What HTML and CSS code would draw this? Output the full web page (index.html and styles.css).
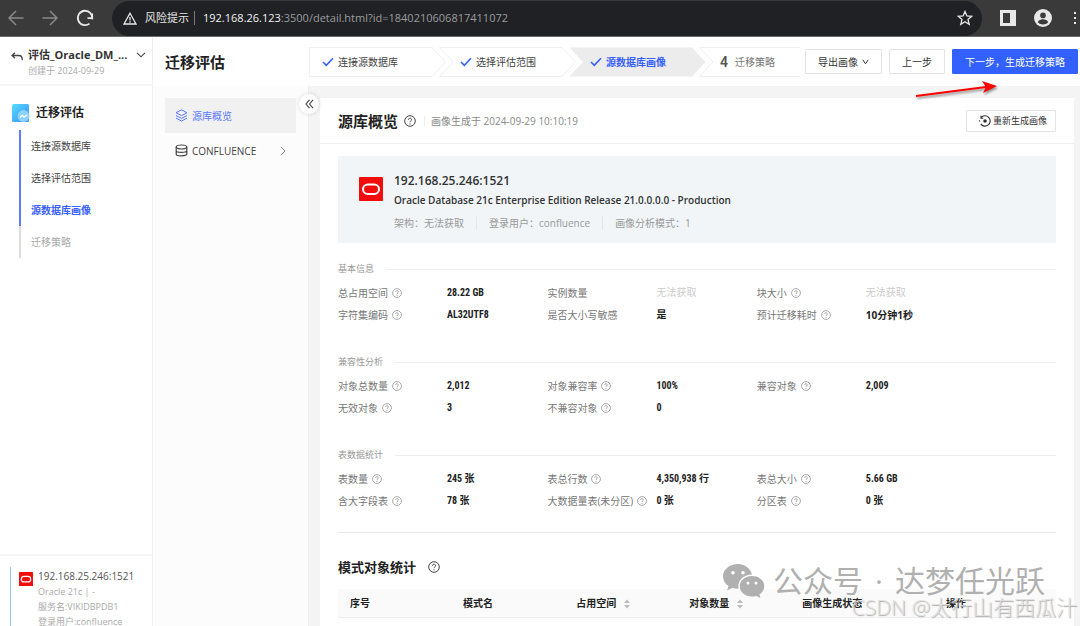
FILE: index.html
```html
<!DOCTYPE html>
<html lang="zh-CN">
<head>
    <meta charset="utf-8">
    <title>迁移评估</title>
    <link rel="stylesheet" href="styles.css">
</head>
<body>
    <svg class="symbols" aria-hidden="true">
        <symbol id="help" viewBox="0 0 12 12">
            <circle cx="6" cy="6" r="5.3" fill="none" stroke="currentColor"/>
            <path d="M4.4 4.8c0-2.1 3.2-2.1 3.2-.1 0 1.2-1.6 1.2-1.6 2.5" fill="none" stroke="currentColor"/>
            <circle cx="6" cy="8.8" r=".65" fill="currentColor"/>
        </symbol>
        <symbol id="tick" viewBox="0 0 12 10">
            <path d="M1 5l3.3 3.3L11 1.3" fill="none" stroke="currentColor" stroke-width="1.6"/>
        </symbol>
        <symbol id="oracle" viewBox="0 0 24 24">
            <rect width="24" height="24" rx="1" fill="#f20d0d"/>
            <rect x="4" y="7.5" width="16" height="9.5" rx="4.75" fill="none" stroke="#fff" stroke-width="2"/>
        </symbol>
        <symbol id="sort" viewBox="0 0 6 10">
            <path d="M0 4l3-3.5L6 4zM0 6l3 3.5L6 6z" fill="currentColor"/>
        </symbol>
    </svg>

    <!-- 浏览器地址栏 -->
    <div class="browser">
        <button class="browser-btn dim" aria-label="后退"><svg width="16" height="16" viewBox="0 0 16 16"><path d="M15.5 8H1.5M8 1L1 8l7 7" fill="none" stroke="currentColor" stroke-width="1.5"/></svg></button>
        <button class="browser-btn dim" aria-label="前进"><svg width="16" height="16" viewBox="0 0 16 16"><path d="M.5 8h14M8 1l7 7-7 7" fill="none" stroke="currentColor" stroke-width="1.5"/></svg></button>
        <button class="browser-btn refresh" aria-label="刷新"><svg width="18" height="18" viewBox="0 0 18 18"><path d="M13.5 14.6a7.2 7.2 0 1 1 2.6-4.2M16.2 4.5v4.7h-4.7" fill="none" stroke="currentColor" stroke-width="1.8"/></svg></button>
        <div class="address">
            <svg width="14" height="13" viewBox="0 0 14 13"><path d="M7 1.2L13 12H1z" fill="none" stroke="currentColor" stroke-width="1.3"/><path d="M7 5v3.4M7 9.3v1.4" stroke="currentColor" stroke-width="1.3"/></svg>
            <span class="warn">风险提示</span>
            <span class="url"><b>192.168.26.123</b>:3500/detail.html?id=1840210606817411072</span>
            <button class="browser-btn star" aria-label="收藏"><svg width="16" height="16" viewBox="0 0 16 16"><path d="M8 1.4l1.9 4.5 4.8.4-3.7 3.2 1.2 4.8L8 11.7l-4.2 2.6L5 9.5 1.3 6.3l4.8-.4z" fill="none" stroke="currentColor" stroke-width="1.3"/></svg></button>
        </div>
        <button class="browser-btn" aria-label="侧边栏"><svg width="16" height="16" viewBox="0 0 16 16"><path d="M0 0h16v16H0zM3 3v10h7V3z" fill="currentColor" fill-rule="evenodd"/></svg></button>
        <button class="browser-btn" aria-label="用户"><svg width="18" height="18" viewBox="0 0 18 18"><circle cx="9" cy="9" r="9" fill="currentColor"/><circle cx="9" cy="6.4" r="2.8" fill="#3a3a3b"/><path d="M3.8 13.3c1-4.2 9.4-4.2 10.4 0-2.6 3-7.8 3-10.4 0z" fill="#3a3a3b"/></svg></button>
        <button class="browser-btn more" aria-label="更多"><svg width="4" height="12" viewBox="0 0 4 12"><path d="M1 0h2v2H1zM1 5h2v2H1zM1 10h2v2H1z" fill="currentColor"/></svg></button>
    </div>

    <div class="app">
        <aside class="sidebar">
            <div class="project">
                <svg class="back" width="12" height="10" viewBox="0 0 12 10"><path d="M4 .8L1 3.5l3 2.7M1 3.5h7c2.2 0 3.3 1.7 3.3 4.8" fill="none" stroke="currentColor" stroke-width="1.3"/></svg>
                <div class="project-text">
                    <div class="project-name">评估_Oracle_DM_...</div>
                    <div class="project-date">创建于 2024-09-29</div>
                </div>
                <svg class="down" width="10" height="6" viewBox="0 0 10 6"><path d="M1 .8l4 4 4-4" fill="none" stroke="currentColor" stroke-width="1.1"/></svg>
            </div>
            <div class="menu-title">
                <svg width="20" height="20" viewBox="0 0 20 20">
                    <defs><linearGradient id="g" x1="0" y1="0" x2="1" y2="1"><stop offset="0" stop-color="#55dcff"/><stop offset="1" stop-color="#3b8cf8"/></linearGradient></defs>
                    <rect x="1" y="1" width="17" height="18" rx="1.5" fill="url(#g)"/>
                    <circle cx="12.5" cy="13" r="6" fill="#8ad2ff"/>
                    <path d="M9 14.5l2.3-2 1.7 1.5 3-2" fill="none" stroke="#fff" stroke-width="1.4"/>
                </svg>
                迁移评估
            </div>
            <nav class="menu">
                <a class="menu-item" href="#">连接源数据库</a>
                <a class="menu-item" href="#">选择评估范围</a>
                <a class="menu-item active" href="#">源数据库画像</a>
                <a class="menu-item disabled" href="#">迁移策略</a>
            </nav>
            <div class="source">
                <div class="source-inner">
                    <svg width="14" height="14"><use href="#oracle"/></svg>
                    <div>
                        <div class="source-host">192.168.25.246:1521</div>
                        <div>Oracle 21c | -</div>
                        <div>服务名:VIKIDBPDB1</div>
                        <div>登录用户:confluence</div>
                    </div>
                </div>
            </div>
        </aside>

        <div class="page">
            <header class="header">
                <h1>迁移评估</h1>
                <ol class="steps">
                    <li class="step"><svg class="step-bg" viewBox="0 0 137 30"><path d="M.5.5H123l13.5 14.5L123 29.5H.5z"/></svg><svg class="tick"><use href="#tick"/></svg>连接源数据库</li>
                    <li class="step"><svg class="step-bg" viewBox="0 0 137 30"><path d="M.5.5H123l13.5 14.5L123 29.5H.5L14 15z"/></svg><svg class="tick"><use href="#tick"/></svg>选择评估范围</li>
                    <li class="step current"><svg class="step-bg" viewBox="0 0 137 30"><path d="M.5.5H123l13.5 14.5L123 29.5H.5L14 15z"/></svg><svg class="tick"><use href="#tick"/></svg>源数据库画像</li>
                    <li class="step last"><svg class="step-bg" viewBox="0 0 137 30"><path d="M101 .5H.5L14 15 .5 29.5H101"/></svg><span class="num">4</span>迁移策略</li>
                </ol>
                <div class="actions">
                    <button class="btn">导出画像 <svg width="7" height="6" viewBox="0 0 7 6"><path d="M.8.8l2.7 4 2.7-4" fill="none" stroke="currentColor"/></svg></button>
                    <button class="btn">上一步</button>
                    <button class="btn primary">下一步，生成迁移策略</button>
                </div>
                <svg class="arrow" width="90" height="24" viewBox="0 0 90 24">
                    <path d="M2 17L72 8" stroke="#f00" stroke-width="2"/>
                    <path d="M68 2l15 5-14 7 3-6z" fill="#f00"/>
                </svg>
            </header>

            <div class="body">
                <nav class="subnav">
                    <a class="subnav-item active" href="#">
                        <svg width="13" height="13" viewBox="0 0 13 13"><path d="M6.5.8l5.5 2.9-5.5 2.9L1 3.7zM1 6.5l5.5 2.9L12 6.5M1 9.1L6.5 12 12 9.1" fill="none" stroke="currentColor"/></svg>
                        源库概览
                    </a>
                    <a class="subnav-item" href="#">
                        <svg width="13" height="13" viewBox="0 0 13 13"><path d="M1.2 3v7.2c0 2.2 10.6 2.2 10.6 0V3M1.2 6.8c0 2.2 10.6 2.2 10.6 0" fill="none" stroke="currentColor" stroke-width="1.2"/><ellipse cx="6.5" cy="3" rx="5.3" ry="2" fill="none" stroke="currentColor" stroke-width="1.2"/></svg>
                        CONFLUENCE
                        <svg class="right" width="6" height="10" viewBox="0 0 6 10"><path d="M1 1l4 4-4 4" fill="none" stroke="currentColor"/></svg>
                    </a>
                    <button class="collapse" aria-label="收起"><svg width="9" height="10" viewBox="0 0 9 10"><path d="M4.5.8L1 5l3.5 4.2M8 .8L4.5 5 8 9.2" fill="none" stroke="currentColor" stroke-width="1.1"/></svg></button>
                </nav>

                <main class="card">
                    <div class="card-header">
                        <h2>源库概览</h2>
                        <svg class="help-lg"><use href="#help"/></svg>
                        <span class="created">画像生成于 2024-09-29 10:10:19</span>
                        <button class="btn small"><svg width="12" height="12" viewBox="0 0 12 12"><path d="M2 2.6a5.2 5.2 0 1 1-.3 6.3M.5 6.5V5.2M2 .8v2.4h2.3" fill="none" stroke="currentColor" stroke-width="1.1"/><circle cx="6" cy="6" r="1.8" fill="currentColor"/></svg>重新生成画像</button>
                    </div>

                    <div class="card-body">
                        <section class="db">
                            <svg width="24" height="24"><use href="#oracle"/></svg>
                            <div>
                                <div class="db-host">192.168.25.246:1521</div>
                                <div class="db-version">Oracle Database 21c Enterprise Edition Release 21.0.0.0.0 - Production</div>
                                <div class="db-meta"><span>架构：无法获取</span><span>登录用户：confluence</span><span>画像分析模式：1</span></div>
                            </div>
                        </section>

                        <section class="group">
                            <h3>基本信息</h3>
                            <dl class="stats">
                                <div><dt>总占用空间<svg class="help"><use href="#help"/></svg></dt><dd>28.22 GB</dd></div>
                                <div><dt>实例数量</dt><dd class="none">无法获取</dd></div>
                                <div><dt>块大小<svg class="help"><use href="#help"/></svg></dt><dd class="none">无法获取</dd></div>
                                <div><dt>字符集编码<svg class="help"><use href="#help"/></svg></dt><dd>AL32UTF8</dd></div>
                                <div><dt>是否大小写敏感</dt><dd>是</dd></div>
                                <div><dt>预计迁移耗时<svg class="help"><use href="#help"/></svg></dt><dd class="wide">10分钟1秒</dd></div>
                            </dl>
                        </section>

                        <section class="group">
                            <h3>兼容性分析</h3>
                            <dl class="stats">
                                <div><dt>对象总数量<svg class="help"><use href="#help"/></svg></dt><dd>2,012</dd></div>
                                <div><dt>对象兼容率<svg class="help"><use href="#help"/></svg></dt><dd>100%</dd></div>
                                <div><dt>兼容对象<svg class="help"><use href="#help"/></svg></dt><dd>2,009</dd></div>
                                <div><dt>无效对象<svg class="help"><use href="#help"/></svg></dt><dd>3</dd></div>
                                <div><dt>不兼容对象<svg class="help"><use href="#help"/></svg></dt><dd>0</dd></div>
                            </dl>
                        </section>

                        <section class="group">
                            <h3>表数据统计</h3>
                            <dl class="stats">
                                <div><dt>表数量<svg class="help"><use href="#help"/></svg></dt><dd>245 张</dd></div>
                                <div><dt>表总行数<svg class="help"><use href="#help"/></svg></dt><dd>4,350,938 行</dd></div>
                                <div><dt>表总大小<svg class="help"><use href="#help"/></svg></dt><dd>5.66 GB</dd></div>
                                <div><dt>含大字段表<svg class="help"><use href="#help"/></svg></dt><dd>78 张</dd></div>
                                <div><dt>大数据量表(未分区)<svg class="help"><use href="#help"/></svg></dt><dd>0 张</dd></div>
                                <div><dt>分区表<svg class="help"><use href="#help"/></svg></dt><dd>0 张</dd></div>
                            </dl>
                        </section>

                        <section class="schema">
                            <h2>模式对象统计 <svg class="help-lg"><use href="#help"/></svg></h2>
                            <table>
                                <thead>
                                    <tr>
                                        <th>序号</th>
                                        <th>模式名</th>
                                        <th>占用空间<svg class="sort"><use href="#sort"/></svg></th>
                                        <th>对象数量<svg class="sort"><use href="#sort"/></svg></th>
                                        <th class="state">画像生成状态</th>
                                        <th class="ops">操作</th>
                                    </tr>
                                </thead>
                            </table>
                        </section>
                    </div>
                </main>
            </div>
        </div>
    </div>

    <!-- 水印 -->
    <div class="mark mark-wechat">
        <svg width="42" height="34" viewBox="0 0 42 34">
            <path d="M15 0C6.7 0 0 5.5 0 12.5c0 4 2.1 7.3 5.5 9.6L4 26.5l5.2-2.6c2 .6 4 .9 6.3.8C14.2 16.5 20 10.6 29 10.4 27.5 4.3 21.8 0 15 0z" fill="currentColor"/>
            <path d="M29 12c-7 0-12.3 4.6-12.3 10.3S22 32.5 29 32.5c1.5 0 3-.2 4.3-.6l4.2 2.1-1.1-3.6c3-1.9 4.9-4.8 4.9-8.1C41.3 16.6 36 12 29 12z" fill="currentColor"/>
            <g fill="#fff"><circle cx="10" cy="8.8" r="1.8"/><circle cx="20" cy="8.8" r="1.8"/><circle cx="25" cy="19" r="1.5"/><circle cx="33" cy="19" r="1.5"/></g>
        </svg>
        <span>公众号</span><span>·</span><span>达梦任光跃</span>
    </div>
    <div class="mark mark-csdn">CSDN @太行山有西瓜汁</div>
</body>
</html>
```
FILE: styles.css
```css
*{
    box-sizing: border-box;
    margin: 0;
    padding: 0;
}
body{
    height: 100vh;
    display: flex;
    flex-direction: column;
    position: relative;
    overflow: hidden;
    font: 10px/16px "Open Sans", "Noto Sans CJK SC", sans-serif;
    color: #444;
    background: #fff;
}
button{
    font: inherit;
    color: inherit;
    background: none;
    border: 0;
    white-space: nowrap;
}
a{
    color: inherit;
    text-decoration: none;
}
svg{
    flex: none;
}
.symbols{
    position: absolute;
    width: 0;
    height: 0;
}

/* 浏览器 */
.browser{
    flex: none;
    height: 37px;
    display: flex;
    align-items: center;
    gap: 18px;
    padding: 0 3px 0 8px;
    background: #3a3a3b;
    border-bottom: 1px solid #6b6d6b;
    color: #e8e8e8;
}
.browser-btn{
    display: flex;
}
.browser-btn.dim{
    color: #8a8a8b;
}
.browser-btn.more{
    margin-left: 3px;
}
.address{
    flex: 1;
    height: 35px;
    display: flex;
    align-items: center;
    gap: 8px;
    padding: 0 9px 0 11px;
    border-radius: 18px;
    background: #202124;
}
.warn{
    font-size: 11px;
    padding-right: 5px;
    border-right: 1px solid #777;
    line-height: 14px;
}
.url{
    font-size: 11px;
    color: #9a9b9d;
}
.url b{
    font-weight: 400;
    color: #f1f1f1;
}
.star{
    margin-left: auto;
}

.app{
    flex: 1;
    min-height: 0;
    display: flex;
}

/* 左侧栏 */
.sidebar{
    flex: none;
    width: 153px;
    display: flex;
    flex-direction: column;
    border-right: 1px solid #f0f0f0;
}
.project{
    height: 49px;
    display: flex;
    gap: 5px;
    padding: 10px 6px 0 11px;
    border-bottom: 2px solid #f5f5f5;
}
.project-text{
    flex: 1;
    min-width: 0;
}
.project-name{
    font-size: 11px;
    font-weight: 700;
    white-space: nowrap;
    color: #333;
}
.project-date{
    font-size: 9px;
    color: #aaa;
}
.back,
.down{
    margin-top: 5px;
}
.menu-title{
    display: flex;
    align-items: center;
    gap: 5px;
    padding: 17px 0 7px 11px;
    font-size: 12px;
    font-weight: 700;
    color: #222;
}
.menu{
    margin-left: 19px;
}
.menu-item{
    display: block;
    padding-left: 10px;
    border-left: 2px solid #5b7cff;
    line-height: 32px;
}
.menu-item.active{
    color: #3660ff;
    font-weight: 700;
}
.menu-item.disabled{
    color: #aaa;
    border-color: #ddd;
}
.source{
    height: 72px;
    margin-top: auto;
    padding: 11px 0 0 10px;
    border-top: 2px solid #f5f5f5;
}
.source-inner{
    display: flex;
    gap: 5px;
    padding: 2px 0 0 8px;
    border-left: 1px solid #8dcbff;
    font-size: 9px;
    line-height: 15px;
    color: #aaa;
}
.source-inner svg{
    margin-top: 3px;
}
.source-host{
    font-size: 10px;
    color: #555;
}

/* 顶部 */
.page{
    flex: 1;
    min-width: 0;
    display: flex;
    flex-direction: column;
}
.header{
    flex: none;
    height: 49px;
    display: flex;
    align-items: center;
    padding: 0 2px 0 12px;
    position: relative;
}
h1,
h2{
    font-size: 15px;
    line-height: 20px;
    font-weight: 700;
    color: #222;
}
.steps{
    display: flex;
    list-style: none;
    margin-left: auto;
}
.step{
    width: 137px;
    height: 30px;
    margin-right: -7px;
    padding-left: 13px;
    display: flex;
    align-items: center;
    gap: 4px;
    position: relative;
}
.step + .step{
    padding-left: 21px;
}
.step.last{
    width: 101px;
    margin-right: 0;
    gap: 7px;
    color: #777;
}
.step-bg{
    position: absolute;
    left: 0;
    top: 0;
    width: 137px;
    height: 30px;
    z-index: -1;
    fill: #fff;
    stroke: #f0f0f0;
}
.step.current{
    color: #3660ff;
    font-weight: 700;
}
.current .step-bg{
    fill: #ececec;
    stroke: none;
}
.tick{
    width: 12px;
    height: 10px;
    color: #3660ff;
}
.num{
    font: 600 14px/20px "Roboto", sans-serif;
    color: #555;
}
.actions{
    display: flex;
    gap: 7px;
    margin-left: 5px;
}
.btn{
    height: 25px;
    display: flex;
    align-items: center;
    gap: 4px;
    padding: 0 12px;
    border: 1px solid #e4e4e4;
    border-radius: 1px;
    background: #fff;
    color: #333;
}
.btn.primary{
    background: #3361ff;
    border-color: #3361ff;
    color: #fff;
}
.btn.small{
    height: 22px;
    margin-left: auto;
    padding: 0 8px 0 12px;
    gap: 2px;
    font-size: 9px;
}
.arrow{
    position: absolute;
    right: 76px;
    top: 42px;
    z-index: 2;
    filter: drop-shadow(1px 2px 1px rgba(0,0,0,0.4));
}

.body{
    flex: 1;
    min-height: 0;
    display: flex;
    background: #f4f4f4;
}
.subnav{
    flex: none;
    width: 156px;
    padding: 12px;
    background: #fcfcfc;
    border-right: 1px solid #eee;
    position: relative;
}
.subnav-item{
    height: 35px;
    display: flex;
    align-items: center;
    gap: 4px;
    padding: 0 10px;
}
.subnav-item.active{
    background: #f1f1f1;
    color: #5878ff;
}
.right{
    margin-left: auto;
    color: #888;
}
.collapse{
    position: absolute;
    right: -11px;
    top: 8px;
    width: 20px;
    height: 20px;
    display: flex;
    align-items: center;
    justify-content: center;
    border-radius: 50%;
    background: #fff;
    box-shadow: 0 0 4px rgba(0,0,0,0.15);
}

/* 内容 */
.card{
    flex: 1;
    min-width: 0;
    margin: 12px 6px 0 11px;
    background: #fff;
    overflow: hidden;
}
.card-header{
    height: 46px;
    display: flex;
    align-items: center;
    padding: 0 18px;
    border-bottom: 1px solid #f0f0f0;
}
.help-lg{
    width: 12px;
    height: 12px;
    margin-left: 6px;
    color: #444;
}
.created{
    margin-left: 8px;
    padding-left: 6px;
    line-height: 10px;
    border-left: 1px solid #eee;
    color: #888;
}
.card-body{
    padding: 12px 18px 0;
}
.db{
    display: flex;
    gap: 11px;
    padding: 15px 21px 10px;
    background: #f1f5f8;
}
.db svg{
    margin-top: 6px;
}
.db-host{
    font-size: 12px;
    line-height: 20px;
    font-weight: 600;
    color: #333;
}
.db-version{
    line-height: 18px;
    font-weight: 600;
    color: #333;
}
.db-meta{
    padding-top: 4px;
    line-height: 20px;
    color: #999;
}
.db-meta span + span{
    margin-left: 12px;
    padding-left: 12px;
    border-left: 1px solid #e4e7ea;
}
.group{
    padding-top: 18px;
    height: 93px;
}
.group h3{
    display: flex;
    align-items: center;
    gap: 12px;
    font-size: 9px;
    font-weight: 400;
    color: #999;
}
.group h3::after{
    content: "";
    flex: 1;
    height: 1px;
    background: #eee;
}
.stats{
    display: grid;
    grid-template-columns: 7fr 7fr 10fr;
    padding-top: 5px;
    line-height: 22px;
}
.stats div{
    display: flex;
}
.stats dt{
    width: 109px;
    display: flex;
    align-items: center;
    gap: 4px;
    white-space: nowrap;
    color: #777;
}
.stats dd{
    font-family: "Roboto Condensed", "Liberation Sans Narrow", "Noto Sans CJK SC", sans-serif;
    font-weight: 700;
    color: #222;
}
.stats dd.wide{
    font-family: "Open Sans", "Noto Sans CJK SC", sans-serif;
}
.stats dd.none{
    font-weight: 400;
    color: #ccc;
}
.help{
    width: 10px;
    height: 10px;
    color: #999;
}
.schema{
    margin-top: 10px;
    padding-top: 24px;
    border-top: 1px solid #e8e8e8;
}
.schema h2{
    display: flex;
    align-items: center;
    font-size: 13px;
}
.schema .help-lg{
    margin-left: 12px;
}
table{
    width: 100%;
    margin-top: 12px;
    table-layout: fixed;
    border-collapse: collapse;
}
th{
    height: 28px;
    padding-left: 12px;
    text-align: left;
    color: #222;
    background: #fafafa;
    border-bottom: 1px solid #eee;
}
.state{
    width: 20%;
}
.ops{
    width: 17%;
}
.sort{
    width: 6px;
    height: 10px;
    margin-left: 8px;
    vertical-align: -2px;
    color: #bbb;
}

.mark{
    position: absolute;
    white-space: nowrap;
}
.mark-wechat{
    right: 35px;
    bottom: 25px;
    display: flex;
    align-items: center;
    gap: 12px;
    font-size: 30px;
    line-height: 40px;
    color: #b0b0b0;
}
.mark-wechat svg{
    margin-right: -4px;
}
.mark-csdn{
    right: 3px;
    bottom: 5px;
    font-size: 21px;
    line-height: 28px;
    font-weight: 300;
    color: rgba(225,225,225,0.9);
    text-shadow: 1px 1px 1px #aaa;
}
```
